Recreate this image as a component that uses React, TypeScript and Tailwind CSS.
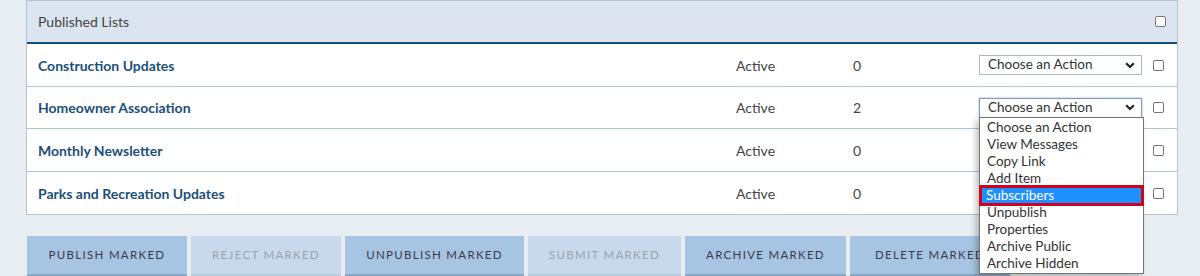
const ROWS = [
  { name: 'Construction Updates', status: 'Active', count: 0, h: 'h-[43px]' },
  { name: 'Homeowner Association', status: 'Active', count: 2, open: true, h: 'h-[42px]' },
  { name: 'Monthly Newsletter', status: 'Active', count: 0, h: 'h-[43px]' },
  { name: 'Parks and Recreation Updates', status: 'Active', count: 0, h: 'h-[42px]' },
];

const OPTIONS = [
  'Choose an Action',
  'View Messages',
  'Copy Link',
  'Add Item',
  'Subscribers',
  'Unpublish',
  'Properties',
  'Archive Public',
  'Archive Hidden',
];

const BUTTONS = [
  { label: 'PUBLISH MARKED', w: 'w-[160px]', disabled: false },
  { label: 'REJECT MARKED', w: 'w-[150px]', disabled: true },
  { label: 'UNPUBLISH MARKED', w: 'w-[179px]', disabled: false },
  { label: 'SUBMIT MARKED', w: 'w-[153px]', disabled: true },
  { label: 'ARCHIVE MARKED', w: 'w-[161px]', disabled: false },
  { label: 'DELETE MARKED', w: 'w-[160px]', disabled: false },
];

function Checkbox() {
  return <span className="block w-[11px] h-[11px] rounded-[2px] border border-[#767676] bg-white" />;
}

function Chevron() {
  return (
    <svg width="10" height="7" viewBox="0 0 10 7" className="shrink-0">
      <path d="M1.2 1.3 L5 5 L8.8 1.3" fill="none" stroke="#222" strokeWidth="2.2" />
    </svg>
  );
}

function ActionSelect({ focused }: { focused?: boolean }) {
  return (
    <div
      className={`flex items-center justify-between h-[20px] w-[163px] pl-[8px] pr-[6px] bg-white text-[13.5px] text-[#333] border ${
        focused ? 'border-[#7d9ac0] shadow-[0_0_2px_rgba(60,100,160,0.5)]' : 'border-[#a9b9cc]'
      }`}
    >
      <span className="leading-none">Choose an Action</span>
      <Chevron />
    </div>
  );
}

function Dropdown() {
  return (
    <div className="absolute left-0 top-[19px] z-10 w-[165px] bg-white border border-[#767676] shadow-[-3px_3px_6px_rgba(0,0,0,0.25)] py-[1px]">
      {OPTIONS.map((opt) =>
        opt === 'Subscribers' ? (
          <div key={opt} className="relative h-[17px]">
            <div className="bg-[#1e90ff] text-white h-[17px] leading-[17px] pl-[6px] text-[13.5px]">{opt}</div>
            {/* highlight frame drawn over the selected option */}
            <span className="absolute -left-[1px] -right-[1px] -top-[2px] -bottom-[2px] border-[3px] border-[#d0021b]" />
          </div>
        ) : (
          <div key={opt} className="h-[17px] leading-[17px] pl-[7px] text-[13.5px] text-[#333]">
            {opt}
          </div>
        )
      )}
    </div>
  );
}

export default function App() {
  return (
    <div className="w-[1200px] h-[276px] overflow-hidden bg-[#e8edf2] font-['Lato','Open_Sans',sans-serif]">
      {/* Panel */}
      <div className="ml-[26px] w-[1152px] border-x border-b border-[#b3c3d6] bg-white">
        <div className="flex items-center justify-between h-[44px] bg-[#dbe4ef] border-t border-[#b3c3d6] border-b-[2px] border-b-[#0e4f7e] pl-[11px] pr-[11px]">
          <span className="text-[14px] text-[#444]">Published Lists</span>
          <Checkbox />
        </div>
        {ROWS.map((row, i) => (
          <div
            key={row.name}
            className={`flex items-center ${row.h} ${i < ROWS.length - 1 ? 'border-b border-[#b3c3d6]' : ''}`}
          >
            <div className="w-[709px] pl-[11px] text-[14px] font-bold text-[#1a4f7a]">{row.name}</div>
            <div className="w-[117px] text-[14px] text-[#444]">{row.status}</div>
            <div className="w-[126px] text-[14px] text-[#444]">{row.count}</div>
            <div className="relative w-[164px]">
              <ActionSelect focused={row.open} />
              {row.open && <Dropdown />}
            </div>
            <div className="ml-[10px]">
              <Checkbox />
            </div>
          </div>
        ))}
      </div>

      {/* Bulk actions */}
      <div className="flex gap-[4px] ml-[27px] mt-[21px]">
        {BUTTONS.map((b) => (
          <div
            key={b.label}
            className={`${b.w} h-[40px] flex items-center justify-center text-[11.5px] tracking-[1.3px] border-b-2 ${
              b.disabled
                ? 'bg-[#c8d9eb] text-[#9aa3ad] border-[#b9cce0]'
                : 'bg-[#a7c5e3] text-[#3a3a4a] border-[#8aa7c6]'
            }`}
          >
            {b.label}
          </div>
        ))}
      </div>
    </div>
  );
}
